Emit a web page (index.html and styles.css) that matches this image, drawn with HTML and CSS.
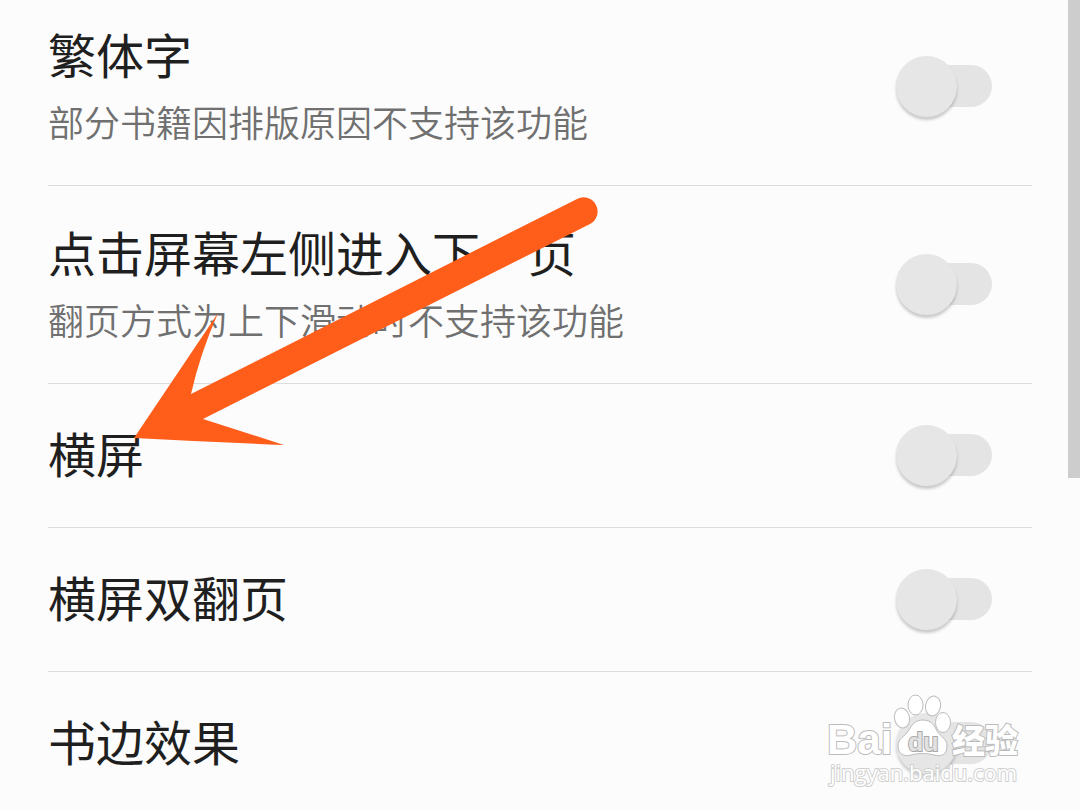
FILE: index.html
```html
<!DOCTYPE html>
<html lang="zh-CN">
<head>
    <meta charset="UTF-8">
    <meta name="viewport" content="width=device-width, initial-scale=1.0">
    <title>阅读设置</title>
    <link rel="stylesheet" href="styles.css">
</head>
<body>
    <main class="settings">
        <div class="setting">
            <label class="setting-text" for="traditional">
                <span class="setting-title">繁体字</span>
                <span class="setting-note">部分书籍因排版原因不支持该功能</span>
            </label>
            <input class="switch" type="checkbox" id="traditional">
        </div>
        <div class="setting">
            <label class="setting-text" for="left-tap">
                <span class="setting-title">点击屏幕左侧进入下一页</span>
                <span class="setting-note">翻页方式为上下滑动时不支持该功能</span>
            </label>
            <input class="switch" type="checkbox" id="left-tap">
        </div>
        <div class="setting">
            <label class="setting-text" for="landscape">
                <span class="setting-title">横屏</span>
            </label>
            <input class="switch" type="checkbox" id="landscape">
        </div>
        <div class="setting">
            <label class="setting-text" for="double-page">
                <span class="setting-title">横屏双翻页</span>
            </label>
            <input class="switch" type="checkbox" id="double-page">
        </div>
        <div class="setting">
            <label class="setting-text" for="book-edge">
                <span class="setting-title">书边效果</span>
            </label>
            <input class="switch" type="checkbox" id="book-edge">
        </div>
    </main>

    <div class="scroll-thumb"></div>

    <!-- Arrow pointing at the landscape setting -->
    <svg class="arrow" width="464" height="252" viewBox="0 0 464 252" aria-hidden="true">
        <path fill="#ff5e1a" d="M0 242 L84 117 Q66 158 57 198 L443 3 A14 14 0 0 1 456 28 L69 223 L150 249 Q75 246 0 242 Z"/>
    </svg>

    <!-- Watermark -->
    <svg class="watermark" width="200" height="96" viewBox="0 0 200 96" aria-label="Baidu 经验">
        <g class="mark">
            <text class="mark-name" x="1" y="60">Bai</text>
            <ellipse cx="76" cy="24" rx="7.5" ry="10" transform="rotate(-12 76 24)"/>
            <ellipse cx="89.5" cy="11" rx="7.5" ry="10"/>
            <ellipse cx="107" cy="12" rx="7.5" ry="10" transform="rotate(12 107 12)"/>
            <ellipse cx="117" cy="28.5" rx="7.5" ry="10"/>
            <path d="M97 26 C105 26 108 31 111 37 C115 43 121 45 121 52 C121 61 115 63 108 61 C100 59 93 59 85 61 C78 63 72 60 72 52 C72 44 79 43 83 36 C86 30 90 26 97 26 Z"/>
            <text class="mark-du" x="82" y="57">du</text>
            <text class="mark-cn" x="126" y="59">经验</text>
            <text class="mark-url" x="4" y="87">jingyan.baidu.com</text>
        </g>
    </svg>
</body>
</html>
```

FILE: styles.css
```css
body {
    position: relative;
    height: 100vh;
    margin: 0;
    overflow: hidden;
    background: #fcfcfc;
    color: #1f1f1f;
    font-family: "Noto Sans CJK SC", sans-serif;
}
.settings {
    padding: 0 48px;
}
.setting {
    display: flex;
    align-items: center;
    justify-content: space-between;
    padding: 32px 40px 31px 0;
    border-bottom: 1px solid #dcdcdc;
    box-sizing: border-box;
    min-height: 144px;
}
.setting:first-child {
    padding-top: 20px;
}
.setting-text {
    display: flex;
    flex-direction: column;
}
.setting-title {
    margin-bottom: 8px;
    font-size: 48px;
    line-height: 66px;
}
.setting-note {
    margin-bottom: 6px;
    color: #707070;
    font-size: 36px;
    font-weight: 350;
    line-height: 54px;
}
.switch {
    appearance: none;
    position: relative;
    flex: none;
    width: 96px;
    height: 62px;
    margin: 0;
    cursor: pointer;
}
.switch::before {
    content: "";
    position: absolute;
    top: 9px;
    left: 10px;
    right: 0;
    height: 42px;
    border-radius: 21px;
    background: #e4e4e4;
}
.switch::after {
    content: "";
    position: absolute;
    top: 0;
    left: 0;
    width: 61px;
    height: 61px;
    border-radius: 50%;
    background: #e6e6e6;
    box-shadow: 0 3px 3px rgba(0, 0, 0, 0.2);
}
.switch:checked::after {
    left: 35px;
}
.scroll-thumb {
    position: absolute;
    top: 0;
    right: 0;
    width: 12px;
    height: 59%;
    background: #cdcdcd;
}
.arrow {
    position: absolute;
    top: 196px;
    left: 134px;
    pointer-events: none;
}
.watermark {
    position: absolute;
    right: 54px;
    bottom: 20px;
    overflow: visible;
    pointer-events: none;
}
.mark {
    fill: #fff;
    stroke: #bcbcbc;
    stroke-width: 1;
}
.mark text {
    paint-order: stroke;
    stroke-width: 2;
}
.mark-name {
    font: bold 42px "Liberation Sans", sans-serif;
}
.mark .mark-du {
    font: bold 25px "Liberation Sans", sans-serif;
    fill: #e2e2e2;
    stroke: #a8a8a8;
}
.mark-cn {
    font: 900 33px "Noto Sans CJK SC", sans-serif;
}
.mark .mark-url {
    font: 22px "Open Sans", sans-serif;
    stroke: #d0d0d0;
}
```
